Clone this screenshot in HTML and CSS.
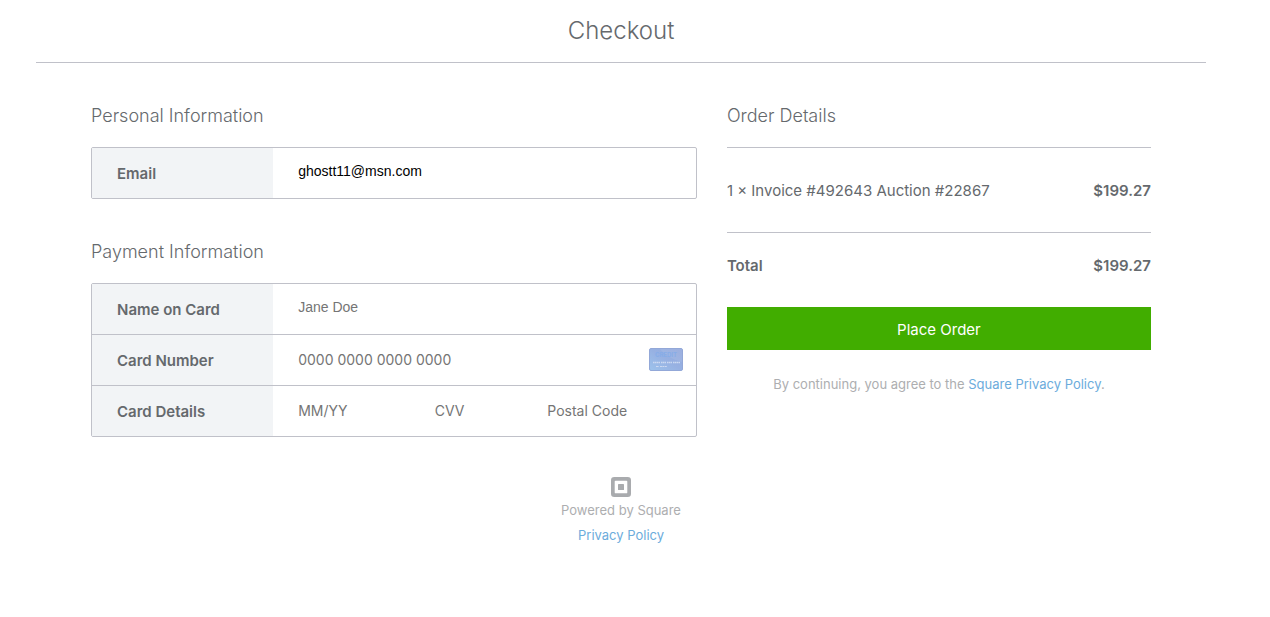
FILE: index.html
```html
<!DOCTYPE html>
<html lang="en">
<head>
    <meta charset="UTF-8">
    <meta name="viewport" content="width=device-width, initial-scale=1.0">
    <title>Checkout</title>
    <link rel="stylesheet" href="styles.css">
</head>
<body>

<header class="page-header">
    <h1>Checkout</h1>
</header>

<form id="checkoutForm" class="checkout">
    <div class="customer">
        <h2>Personal Information</h2>
        <div class="fields">
            <div class="field">
                <label for="email">Email</label>
                <div class="field-value">
                    <input class="plain" type="email" id="email" name="email" value="ghostt11@msn.com">
                </div>
            </div>
        </div>

        <h2>Payment Information</h2>
        <div class="fields">
            <div class="field">
                <label for="name">Name on Card</label>
                <div class="field-value">
                    <input class="plain" type="text" id="name" name="name" placeholder="Jane Doe">
                </div>
            </div>
            <div class="field">
                <label for="number">Card Number</label>
                <div class="field-value">
                    <input type="text" id="number" name="number" placeholder="0000 0000 0000 0000">
                    <svg class="card-icon" width="34" height="23" viewBox="0 0 34 23" aria-hidden="true">
                        <defs>
                            <linearGradient id="cardFill" x1="0" y1="1" x2="1" y2="0">
                                <stop offset="0" stop-color="#9dc3ec"/>
                                <stop offset="0.5" stop-color="#97b1e2"/>
                                <stop offset="1" stop-color="#94a9dd"/>
                            </linearGradient>
                        </defs>
                        <rect x="0.5" y="0.5" width="33" height="22" rx="1.5" fill="url(#cardFill)" stroke="#93a8d8"/>
                        <path d="M11 1h22v13C24 12 16 7 11 1z" fill="#fff" opacity="0.08"/>
                        <text x="17" y="9" class="card-word">CREDIT</text>
                        <path d="M4 14.5h7m1 0h5m1 0h5m1 0h7" stroke="#ccd9f1" stroke-width="1.4" stroke-dasharray="1.5 0.4"/>
                        <path d="M7 18.5h3m1 0h7" stroke="#ccd9f1" stroke-width="1" stroke-dasharray="2 0.4"/>
                    </svg>
                </div>
            </div>
            <div class="field">
                <label for="expiry">Card Details</label>
                <div class="field-value details">
                    <input type="text" id="expiry" name="expiry" placeholder="MM/YY">
                    <input type="text" id="cvv" name="cvv" placeholder="CVV" aria-label="CVV">
                    <input type="text" id="postal" name="postal" placeholder="Postal Code" aria-label="Postal Code">
                </div>
            </div>
        </div>
    </div>

    <div class="order">
        <h2>Order Details</h2>
        <div class="order-row order-item">
            <span>1 × Invoice #492643 Auction #22867</span>
            <strong>$199.27</strong>
        </div>
        <div class="order-row">
            <strong>Total</strong>
            <strong>$199.27</strong>
        </div>
        <button type="submit">Place Order</button>
        <p class="terms">By continuing, you agree to the <a href="#">Square Privacy Policy</a>.</p>
    </div>
</form>

<footer class="page-footer">
    <svg width="20" height="20" viewBox="0 0 20 20" aria-hidden="true">
        <path fill="#a9abae" fill-rule="evenodd" d="M3.3 0h13.4A3.3 3.3 0 0 1 20 3.3v13.4a3.3 3.3 0 0 1-3.3 3.3H3.3A3.3 3.3 0 0 1 0 16.7V3.3A3.3 3.3 0 0 1 3.3 0zM4.6 3.7a.9.9 0 0 0-.9.9v10.8c0 .5.4.9.9.9h10.8c.5 0 .9-.4.9-.9V4.6a.9.9 0 0 0-.9-.9z"/>
        <rect x="7" y="7" width="6" height="6" rx="0.6" fill="#a9abae"/>
    </svg>
    <p>Powered by Square</p>
    <a href="#">Privacy Policy</a>
</footer>

<script>
    document.getElementById('checkoutForm').addEventListener('submit', function(event) {
        event.preventDefault();
    });
</script>

</body>
</html>
```
FILE: styles.css
```css
* {
    box-sizing: border-box;
}
body {
    margin: 0;
    padding: 0 64px 0 36px;
    font-family: Inter, sans-serif;
    font-size: 15px;
    color: #65696d;
    background-color: #fff;
}
h1, h2 {
    margin: 0;
    font-weight: 300;
}
h1 {
    font-size: 24px;
    line-height: 30px;
}
h2 {
    font-size: 18px;
    line-height: 24px;
    margin-bottom: 19px;
}
a {
    color: #6cacdc;
    text-decoration: none;
}
a:hover {
    text-decoration: underline;
}
.page-header {
    padding: 16px 0;
    text-align: center;
    border-bottom: 1px solid #c0c1c9;
}
.checkout {
    display: grid;
    grid-template-columns: 10fr 7fr;
    column-gap: 30px;
    padding: 41px 55px 0;
}
.fields {
    border: 1px solid #c0c1c9;
    border-radius: 2px;
}
.fields + h2 {
    margin-top: 41px;
}
.field {
    display: grid;
    grid-template-columns: 3fr 7fr;
}
.field + .field {
    border-top: 1px solid #c0c1c9;
}
.field label {
    padding: 1px 0 0 25px;
    line-height: 49px;
    font-weight: 600;
    font-size: 15px;
    background-color: #f2f4f6;
}
.field-value {
    display: flex;
    align-items: center;
    padding: 0 13px 2px 25px;
}
.field-value input {
    flex: 1;
    min-width: 0;
    height: 48px;
    padding: 0;
    border: none;
    outline: none;
    background: none;
    font-family: Inter, sans-serif;
    font-size: 14px;
    color: #000;
}
.field-value input::placeholder {
    color: #757575;
    opacity: 1;
}
.field-value input.plain {
    height: 46px;
    align-self: flex-start;
    font-family: "Liberation Sans", Arial, sans-serif;
}
.details {
    display: grid;
    grid-template-columns: 137fr 113fr 136fr;
}
.card-word {
    font-family: Inter, sans-serif;
    font-size: 6px;
    font-weight: 700;
    text-anchor: middle;
    fill: #86ade8;
}
.order h2 {
    padding-bottom: 19px;
    margin-bottom: 0;
    border-bottom: 1px solid #c0c1c9;
}
.order-row {
    display: flex;
    justify-content: space-between;
    padding: 21px 0 29px;
    line-height: 24px;
}
.order-row strong {
    font-weight: 600;
}
.order-item {
    padding: 31px 0 29px;
    border-bottom: 1px solid #c0c1c9;
}
button {
    width: 100%;
    height: 43px;
    padding: 2px 0 0;
    border: none;
    background-color: #41ad00;
    color: #fff;
    font-family: Inter, sans-serif;
    font-size: 15px;
    cursor: pointer;
}
button:hover {
    background-color: #399800;
}
.terms {
    margin: 24px 0 0;
    text-align: center;
    font-size: 13px;
    line-height: 20px;
    color: #adaeb0;
}
.page-footer {
    display: flex;
    flex-direction: column;
    align-items: center;
    gap: 1px;
    padding-top: 40px;
    font-size: 13px;
    line-height: 24px;
    color: #adaeb0;
}
.page-footer p {
    margin: 0;
}
```
